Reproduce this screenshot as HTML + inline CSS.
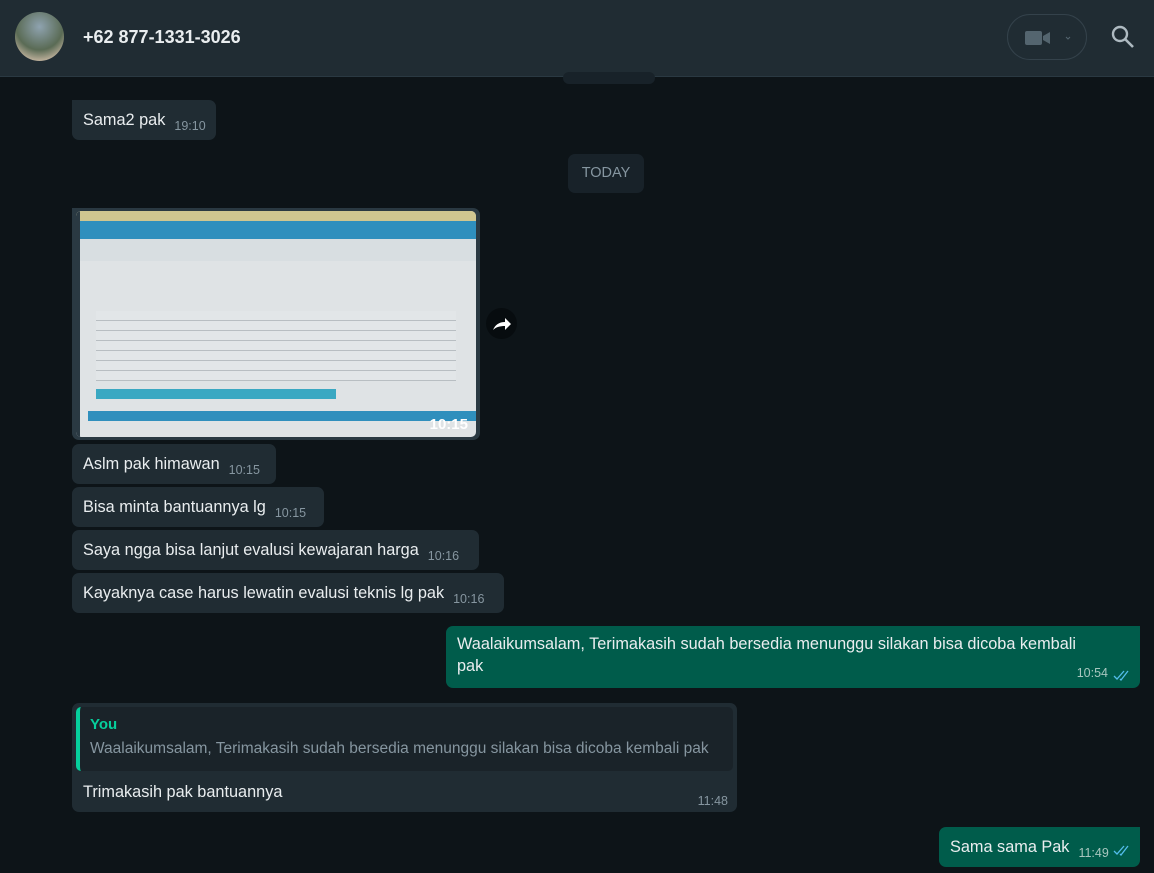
<!DOCTYPE html>
<html><head><meta charset="utf-8"><style>
*{margin:0;padding:0;box-sizing:border-box}
body{width:1154px;height:873px;overflow:hidden;background:#0d1418;font-family:"Liberation Sans",sans-serif;position:relative;color:#e9edef}
.hdr{position:absolute;left:0;top:0;width:1154px;height:77px;background:#202c33;border-bottom:1px solid #2a3942}
.av{position:absolute;left:15px;top:12px;width:49px;height:49px;border-radius:50%;background:radial-gradient(circle at 50% 30%,#8fa3b0,#5a6b55 55%,#b9ad98 80%)}
.name{position:absolute;left:83px;top:27px;font-size:18px;font-weight:bold;color:#e9edef}
.vid{position:absolute;left:1007px;top:14px;width:80px;height:46px;border:1px solid #34424b;border-radius:23px}
.b{position:absolute;background:#202c33;border-radius:7px;font-size:16.3px;padding:0 10px 0 11px;line-height:40px;white-space:nowrap}
.o{background:#005c4b}
.t{font-size:12.5px;color:#8696a0;margin-left:9px;position:relative;top:5px}
.o .t{color:#a8c6bf}
.pill{position:absolute;background:#182229;border-radius:7px;color:#8696a0;font-size:14.5px;text-align:center}
</style></head><body>
<div class="hdr">
<div class="av"></div>
<div class="name">+62 877-1331-3026</div>
<div class="vid"><svg width="80" height="46" viewBox="0 0 80 46"><rect x="17" y="16" width="17" height="14" rx="2" fill="#54656f"/><path d="M35 21l7-4v12l-7-4z" fill="#54656f"/><path d="M58 22l2 2 2-2" stroke="#54656f" fill="none" stroke-width="1"/></svg></div>
<svg style="position:absolute;left:1110px;top:24px" width="26" height="26" viewBox="0 0 26 26"><circle cx="10" cy="10" r="7" stroke="#aebac1" stroke-width="2.4" fill="none"/><path d="M15 15l8 8" stroke="#aebac1" stroke-width="2.6"/></svg>
</div>
<div class="pill" style="left:563px;top:72px;width:92px;height:12px"></div>
<div class="b" style="left:72px;top:100px;width:144px;height:40px;border-top-left-radius:0">Sama2 pak<span class="t">19:10</span></div>
<div class="pill" style="left:568px;top:154px;width:76px;height:39px;line-height:39px">TODAY</div>
<div class="b" style="left:72px;top:208px;width:408px;height:232px;padding:3px 4px;border-top-left-radius:0;background:#2a3942">
<div style="position:relative;width:400px;height:226px;border-radius:5px;overflow:hidden;background:#dfe3e5">
<div style="height:10px;background:#cfc690"></div>
<div style="height:18px;background:#2f8fbd"></div>
<div style="height:22px;background:#d8dee1"></div>
<div style="position:absolute;left:20px;top:100px;width:360px;height:70px;background:repeating-linear-gradient(#e2e6e8 0 9px,#b8bec2 9px 10px)"></div>
<div style="position:absolute;left:20px;top:178px;width:240px;height:10px;background:#3aa8c2"></div>
<div style="position:absolute;left:12px;top:200px;width:388px;height:10px;background:#2f8fbd"></div>
<div style="position:absolute;left:0;top:0;width:4px;height:226px;background:#2a3942"></div>
<div style="position:absolute;right:8px;bottom:4px;font-size:15px;font-weight:bold;color:#fff;line-height:16px">10:15</div>
</div></div>
<div style="position:absolute;left:486px;top:308px;width:31px;height:31px;border-radius:50%;background:#070c0f"><svg width="31" height="31" viewBox="0 0 31 31"><path d="M7 22c2-5 6-8 12-8v-4l6 6-6 6v-4c-5 0-9 1-12 4z" fill="#fff"/></svg></div>
<div class="b" style="left:72px;top:444px;width:204px;height:40px">Aslm pak himawan<span class="t">10:15</span></div>
<div class="b" style="left:72px;top:487px;width:252px;height:40px">Bisa minta bantuannya lg<span class="t">10:15</span></div>
<div class="b" style="left:72px;top:530px;width:407px;height:40px">Saya ngga bisa lanjut evalusi kewajaran harga<span class="t">10:16</span></div>
<div class="b" style="left:72px;top:573px;width:432px;height:40px">Kayaknya case harus lewatin evalusi teknis lg pak<span class="t">10:16</span></div>
<div class="b o" style="left:446px;top:626px;width:694px;height:62px;line-height:22px;padding:7px 50px 7px 11px;white-space:normal;border-top-right-radius:0">Waalaikumsalam, Terimakasih sudah bersedia menunggu silakan bisa dicoba kembali pak
<span class="t" style="position:absolute;right:32px;bottom:4px;top:auto">10:54</span>
<svg style="position:absolute;right:9px;bottom:7px" width="18" height="11" viewBox="0 0 18 11"><path d="M1 6l3 3 7-8M7 9l1 1 7-9" stroke="#53bdeb" stroke-width="1.3" fill="none"/></svg></div>
<div class="b" style="left:72px;top:703px;width:665px;height:109px;padding:0">
<div style="position:absolute;left:4px;top:4px;width:657px;height:64px;background:#1a2329;border-radius:5px;border-left:4px solid #06cf9c;padding:8px 10px;line-height:20px">
<div style="color:#06cf9c;font-weight:bold;font-size:15px">You</div>
<div style="color:#8696a0;font-size:15.5px;margin-top:4px">Waalaikumsalam, Terimakasih sudah bersedia menunggu silakan bisa dicoba kembali pak</div></div>
<div style="position:absolute;left:11px;top:78px;line-height:22px">Trimakasih pak bantuannya</div>
<span class="t" style="position:absolute;right:9px;top:auto;bottom:4px;line-height:14px">11:48</span></div>
<div class="b o" style="left:939px;top:827px;width:201px;height:40px;border-top-right-radius:0">Sama sama Pak<span class="t">11:49</span><svg style="position:relative;top:4px;margin-left:4px" width="18" height="11" viewBox="0 0 18 11"><path d="M1 6l3 3 7-8M7 9l1 1 7-9" stroke="#53bdeb" stroke-width="1.3" fill="none"/></svg></div>
</body></html>
